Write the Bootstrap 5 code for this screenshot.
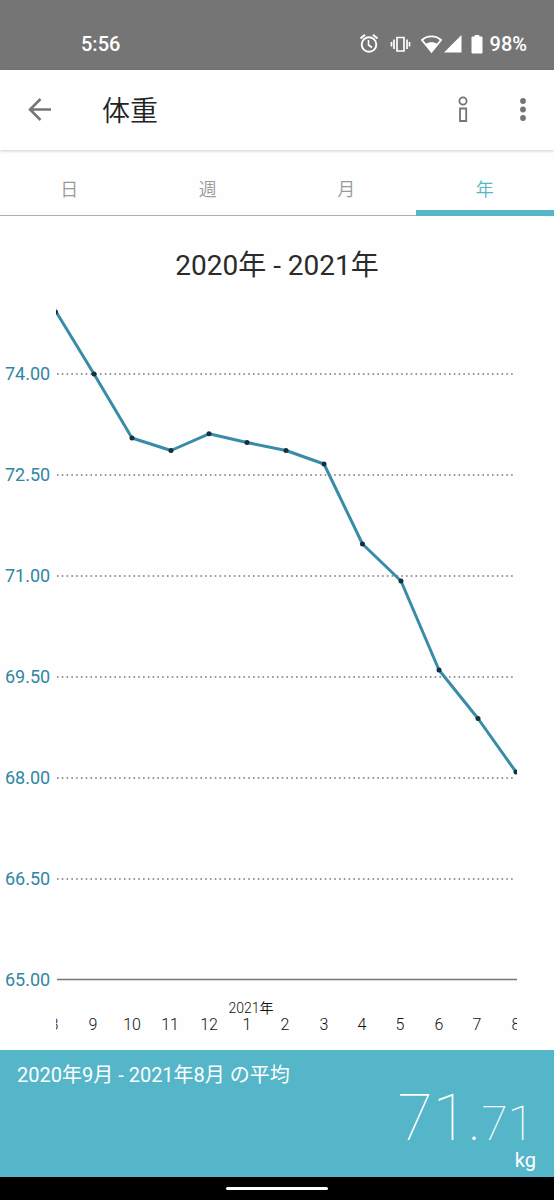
<!DOCTYPE html>
<html lang="ja">
<head>
<meta charset="utf-8">
<meta name="viewport" content="width=device-width, initial-scale=1">
<title>体重</title>
<link href="https://cdn.jsdelivr.net/npm/bootstrap@5.3.0/dist/css/bootstrap.min.css" rel="stylesheet">
<style>
  :root { --teal: #54b6c8; --axis: #2e87a3; --ink: #2b2b2b; --icon: #757575; }
  body { font-family: Roboto, "Noto Sans CJK JP", sans-serif; color: var(--ink); background: #fefefe; }
  svg { display: block; flex-shrink: 0; }
  .status-bar { height: 70px; background: #757575; color: #fff; padding: 17px 27px 0 81px; font-size: 20px; line-height: 1; font-weight: 500; }
  .app-bar { height: 80px; padding: 0 17px 0 25px; background: #fff; box-shadow: 0 1px 3px rgba(0,0,0,.2); z-index: 1; }
  .app-title { font-size: 28px; line-height: 40px; font-weight: 350; margin-left: 49px; padding-top: 4px; color: #222; }
  .icon-btn { padding: 0; border: 0; color: var(--icon); }
  .info-btn { margin-right: 39px; }
  .range-tabs { box-shadow: inset 0 -1px #b0b0b0; height: 66px; }
  .range-tab { border: 0; border-radius: 0; background: none; color: #999; font-size: 18px; line-height: 24px; font-weight: 350; padding: 19px 0 0; border-bottom: 6px solid transparent; }
  .range-tab.active { color: var(--teal); border-bottom-color: var(--teal); }
  .period { font-size: 28px; line-height: 40px; font-weight: 400; padding: 30px 0 14px; }
  .y-labels { font-size: 18px; fill: var(--axis); }
  .x-labels { font-size: 16px; font-weight: 300; fill: #111; text-anchor: middle; }
  .year-label { font-size: 14px; font-weight: 350; fill: #111; text-anchor: middle; }
  .average { background: var(--teal); color: #fff; height: 127px; padding: 11px 18px 0 17px; }
  .average-title { font-size: 20px; line-height: 28px; font-weight: 400; }
  .average-value { font-size: 64px; line-height: 54px; font-weight: 100; padding: 3px 2px 0 0; }
  .average-value small { font-size: 48px; line-height: 1; }
  .average-unit { font-size: 20px; line-height: 24px; }
  .gesture-bar { height: 23px; background: #000; }
  .gesture-pill { width: 102px; height: 3px; background: #fff; }
</style>
<script src="https://cdn.jsdelivr.net/npm/bootstrap@5.3.0/dist/js/bootstrap.bundle.min.js"></script>
</head>
<body>
<div class="d-flex flex-column min-vh-100">
  <div class="status-bar d-flex align-items-center justify-content-between">
    <span>5:56</span>
    <div class="d-flex align-items-center">
      <svg width="133" height="24" viewBox="0 0 133 24" fill="none" stroke="#fff" aria-hidden="true">
        <circle cx="12" cy="12.500" r="7.300" stroke-width="1.900"/>
        <path d="M11.500 8v5l3.500 2.500" stroke-width="1.600"/>
        <path d="M3.500 6.500 8 2.800M20.500 6.500 16 2.800" stroke-width="2"/>
        <path d="M40 5.500h7v13.500h-7zM37 7.500v9.500M50 7.500v9.500" stroke-width="1.700"/>
        <path d="M34.500 10v4.500M52.500 10v4.500" stroke-width="1.700"/>
        <path d="M65 8C70 3.200 79 3.200 84 8L74.500 19.800z" stroke-width="1.800"/>
        <path d="M68.500 12.200c3.500-2.600 8.500-2.600 12 0l-6 7.800z" fill="#fff" stroke="none"/>
        <path d="M87 20.500 104.500 3v17.500z" fill="#fff" stroke="none"/>
        <path d="M115 5h3V3.500h4V5h3v16h-10z" fill="#fff" stroke="#fff" stroke-width="1" stroke-linejoin="round" />
      </svg>
      <span>98%</span>
    </div>
  </div>

  <header class="app-bar d-flex align-items-center position-relative">
    <button class="btn icon-btn" type="button" aria-label="戻る">
      <svg width="28" height="28" viewBox="0 0 28 28" fill="none" stroke="currentColor" stroke-width="2.500"><path d="M26 13.500H5M15.500 3 5 13.500 15.500 24"/></svg>
    </button>
    <h1 class="app-title mb-0 me-auto">体重</h1>
    <button class="btn icon-btn info-btn" type="button" aria-label="情報">
      <svg width="14" height="30" viewBox="0 0 14 30" fill="none" stroke="currentColor" stroke-width="1.800"><circle cx="7" cy="6" r="3.600"/><path d="M4 13.500h6.200v12.500H4z"/></svg>
    </button>
    <button class="btn icon-btn" type="button" aria-label="メニュー">
      <svg width="28" height="28" viewBox="0 0 28 28" fill="currentColor"><circle cx="14" cy="5" r="2.900"/><circle cx="14" cy="13.500" r="2.900"/><circle cx="14" cy="22" r="2.900"/></svg>
    </button>
  </header>

  <nav class="range-tabs d-flex" role="tablist" aria-label="期間">
    <button class="range-tab flex-fill w-25" type="button" role="tab" aria-selected="false">日</button>
    <button class="range-tab flex-fill w-25" type="button" role="tab" aria-selected="false">週</button>
    <button class="range-tab flex-fill w-25" type="button" role="tab" aria-selected="false">月</button>
    <button class="range-tab flex-fill w-25 active" type="button" role="tab" aria-selected="true">年</button>
  </nav>

  <main class="flex-grow-1">
    <h2 class="period text-center mb-0">2020年 - 2021年</h2>
    <svg class="w-100" viewBox="0 0 554 750" role="img" aria-label="体重の推移">
      <defs><clipPath id="plot"><rect x="56" y="0" width="461" height="750"/></clipPath></defs>
      <path d="M57 74H515M57 175H515M57 276H515M57 377H515M57 478H515M57 579H515" stroke="#777" stroke-width="1.600" stroke-dasharray="1.600 3.180"/>
      <path d="M57 679.500H517" stroke="#777" stroke-width="1.600"/>
      <g class="y-labels">
        <text x="5" y="80">74.00</text>
        <text x="5" y="181">72.50</text>
        <text x="5" y="282">71.00</text>
        <text x="5" y="383">69.50</text>
        <text x="5" y="484">68.00</text>
        <text x="5" y="585">66.50</text>
        <text x="5" y="686">65.00</text>
      </g>
      <g clip-path="url(#plot)">
        <polyline points="55,10 94,74 132,138 171,150.500 209,133.800 247,142.500 286,150.500 324,164 362.500,244 401,281 439,370 478,418.500 516,472" fill="none" stroke="#388ca8" stroke-width="3" stroke-linejoin="round"/>
        <g fill="#17303d">
          <circle cx="55.500" cy="12" r="2.500"/><circle cx="94" cy="74" r="2.500"/><circle cx="132" cy="138" r="2.500"/><circle cx="171" cy="150.500" r="2.500"/><circle cx="209" cy="133.800" r="2.500"/><circle cx="247" cy="142.500" r="2.500"/><circle cx="286" cy="150.500" r="2.500"/><circle cx="324" cy="164" r="2.500"/><circle cx="362.500" cy="244" r="2.500"/><circle cx="401" cy="281" r="2.500"/><circle cx="439" cy="370" r="2.500"/><circle cx="478" cy="418.500" r="2.500"/><circle cx="516" cy="472" r="2.500"/>
        </g>
        <text class="year-label" x="251" y="713">2021年</text>
        <g class="x-labels">
          <text x="54" y="730">8</text><text x="93" y="730">9</text><text x="132" y="730">10</text><text x="170" y="730">11</text><text x="209" y="730">12</text><text x="247" y="730">1</text><text x="285" y="730">2</text><text x="324" y="730">3</text><text x="362" y="730">4</text><text x="400" y="730">5</text><text x="439" y="730">6</text><text x="477" y="730">7</text><text x="516" y="730">8</text>
        </g>
      </g>
    </svg>
  </main>

  <section class="average">
    <h3 class="average-title mb-0">2020年9月 - 2021年8月 の平均</h3>
    <div class="average-value text-end">71.<small>71</small></div>
    <div class="average-unit text-end">kg</div>
  </section>
  <div class="gesture-bar d-flex align-items-center justify-content-center"><div class="gesture-pill rounded-pill"></div></div>
</div>
</body>
</html>
